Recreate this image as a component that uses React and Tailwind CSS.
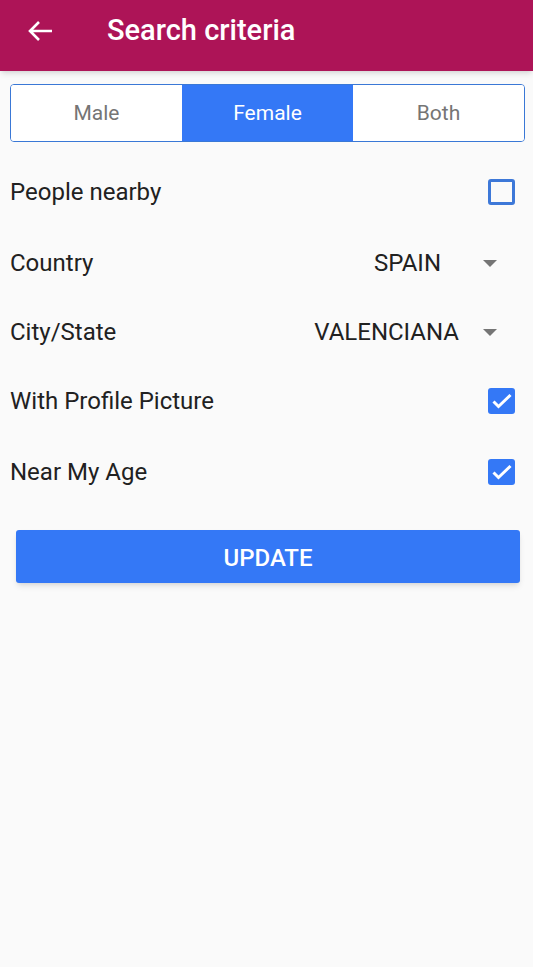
import { useState } from 'react';

const Checkbox = ({ checked, onChange }) => (
  <button
    onClick={onChange}
    className={`w-[27px] h-[26px] rounded-[3px] flex items-center justify-center ${
      checked ? 'bg-[#3478f6]' : 'border-[3px] border-[#3d78d8]'
    }`}
  >
    {checked && (
      <svg viewBox="0 0 26 26" className="w-[26px] h-[26px]" fill="none" stroke="white" strokeWidth={3}>
        <path d="M4.5 13.5l5 5L21.5 7" />
      </svg>
    )}
  </button>
);

const Caret = () => (
  <svg viewBox="0 0 14 7" className="w-[14px] h-[7px]">
    <path d="M0 0h14L7 7z" fill="#757575" />
  </svg>
);

export default function App() {
  const [gender, setGender] = useState('Female');
  const [nearby, setNearby] = useState(false);
  const [withPic, setWithPic] = useState(true);
  const [nearAge, setNearAge] = useState(true);

  return (
    <div className="min-h-[967px] bg-[#fafafa] font-['Roboto',sans-serif]">
      <header className="h-[71px] pb-[9px] bg-[#ad1457] flex items-center shadow-md">
        <button className="ml-[27px] w-[26px] h-[26px] flex items-center justify-center">
          <svg viewBox="0 0 26 22" className="w-[26px] h-[22px]" fill="none" stroke="white" strokeWidth={2.6}>
            <path d="M25 11H3M12 2l-9 9 9 9" />
          </svg>
        </button>
        <h1 className="ml-[54px] text-white text-[29px] font-medium">Search criteria</h1>
      </header>

      <div className="ml-[10px] mr-[8px] mt-[13px] h-[58px] flex border-[1.5px] border-[#3a78d6] rounded-[4px] overflow-hidden">
        {['Male', 'Female', 'Both'].map((g) => (
          <button
            key={g}
            onClick={() => setGender(g)}
            className={`flex-1 pt-[2px] text-[21px] ${
              gender === g ? 'bg-[#3478f6] text-white' : 'bg-white text-[#757575]'
            }`}
          >
            {g}
          </button>
        ))}
      </div>

      <div className="px-[10px] text-[24px] text-[#212121]">
        <div className="h-[72px] mt-[14px] flex items-center justify-between pr-[8px]">
          <span>People nearby</span>
          <Checkbox checked={nearby} onChange={() => setNearby(!nearby)} />
        </div>
        <div className="h-[70px] flex items-center justify-between">
          <span>Country</span>
          <div className="flex items-center">
            <span>SPAIN</span>
            <span className="ml-[42px] mr-[26px]"><Caret /></span>
          </div>
        </div>
        <div className="h-[68px] flex items-center justify-between">
          <span>City/State</span>
          <div className="flex items-center">
            <span>VALENCIANA</span>
            <span className="ml-[24px] mr-[26px]"><Caret /></span>
          </div>
        </div>
        <div className="h-[70px] flex items-center justify-between pr-[8px]">
          <span>With Profile Picture</span>
          <Checkbox checked={withPic} onChange={() => setWithPic(!withPic)} />
        </div>
        <div className="h-[72px] flex items-center justify-between pr-[8px]">
          <span>Near My Age</span>
          <Checkbox checked={nearAge} onChange={() => setNearAge(!nearAge)} />
        </div>
      </div>

      <div className="pl-[16px] pr-[13px] mt-[22px]">
        <button className="w-full h-[53px] pt-[3px] bg-[#3478f6] rounded-[3px] shadow-md text-white text-[24px] font-medium">
          UPDATE
        </button>
      </div>
    </div>
  );
}
